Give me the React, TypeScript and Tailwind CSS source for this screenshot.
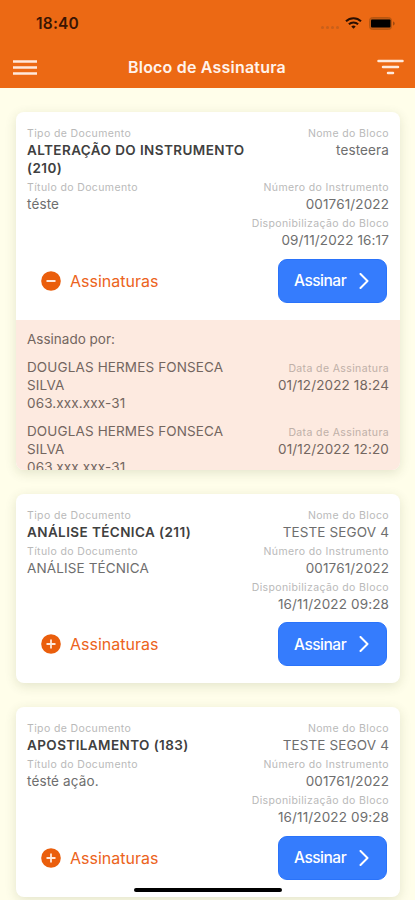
import { useState } from "react"

const signatures = [
  { name: "DOUGLAS HERMES FONSECA SILVA", cpf: "063.xxx.xxx-31", date: "01/12/2022 18:24" },
  { name: "DOUGLAS HERMES FONSECA SILVA", cpf: "063.xxx.xxx-31", date: "01/12/2022 12:20" },
]

const documents = [
  {
    id: 1,
    type: "ALTERAÇÃO DO INSTRUMENTO (210)",
    title: "téste",
    block: "testeera",
    number: "001761/2022",
    available: "09/11/2022 16:17",
  },
  {
    id: 2,
    type: "ANÁLISE TÉCNICA (211)",
    title: "ANÁLISE TÉCNICA",
    block: "TESTE SEGOV 4",
    number: "001761/2022",
    available: "16/11/2022 09:28",
  },
  {
    id: 3,
    type: "APOSTILAMENTO (183)",
    title: "tésté ação.",
    block: "TESTE SEGOV 4",
    number: "001761/2022",
    available: "16/11/2022 09:28",
  },
]

type Doc = (typeof documents)[number]

function Label({ children }: { children: string }) {
  return (
    <span className="block h-[18px] text-[10.5px] leading-[22px] tracking-[0.38px] whitespace-nowrap text-[#b9b9b9]">
      {children}
    </span>
  )
}

function Value({ children }: { children: string }) {
  return <span className="block text-[13.5px] leading-[18px] tracking-[0.13px] text-[#6e6e6e]">{children}</span>
}

function StatusBar() {
  return (
    <div className="flex h-[46px] items-center justify-between pl-9 pr-[20px]">
      <span className="pt-[2px] text-[15.5px] font-semibold leading-none tracking-[0.2px] text-[#3a1503]">18:40</span>
      <div className="flex items-center">
        <div className="mr-[6px] mt-[8px] flex gap-[2px]">
          {[0, 1, 2, 3].map((i) => (
            <span key={i} className="size-[3px] rounded-full bg-[#c9601a]" />
          ))}
        </div>
        <svg width="17" height="12" viewBox="0 0 17 12" fill="none" stroke="#2a0f02" strokeWidth="2">
          <path d="M1 4.3a10.6 10.6 0 0 1 15 0" />
          <path d="M3.9 7.3a6.5 6.5 0 0 1 9.2 0" />
          <path d="M8.5 11.8 6.3 9.6a3.1 3.1 0 0 1 4.4 0z" fill="#2a0f02" stroke="none" />
        </svg>
        <svg className="ml-[7px]" width="26" height="13" viewBox="0 0 26 13">
          <rect x="0.5" y="0.5" width="22" height="12" rx="3" fill="#c05a14" stroke="#b8560f" />
          <rect x="2" y="2.5" width="19.5" height="8" rx="1" fill="#000" />
          <path d="M24 4.5v4c1-.4 1.7-1.1 1.7-2s-.7-1.6-1.7-2z" fill="#a04a10" />
        </svg>
      </div>
    </div>
  )
}

function DocumentCard({ doc, open, onToggle }: { doc: Doc; open: boolean; onToggle: () => void }) {
  return (
    <div className="overflow-hidden rounded-[8px] bg-white shadow-[0_3px_12px_rgba(60,70,20,0.14)]">
      <div className="px-[11px] pb-[17px] pt-[11px]">
        <div className="grid grid-cols-[220px_1fr]">
          <div>
            <Label>Tipo de Documento</Label>
            <span className="block text-[13.5px] font-semibold leading-[18px] tracking-[0.41px] text-[#404040]">
              {doc.type}
            </span>
          </div>
          <div className="text-right">
            <Label>Nome do Bloco</Label>
            <Value>{doc.block}</Value>
          </div>
          <div>
            <Label>Título do Documento</Label>
            <Value>{doc.title}</Value>
          </div>
          <div className="text-right">
            <Label>Número do Instrumento</Label>
            <Value>{doc.number}</Value>
            <Label>Disponibilização do Bloco</Label>
            <Value>{doc.available}</Value>
          </div>
        </div>

        {/* Actions */}
        <div className="mt-[9.5px] flex items-center justify-between pl-[13.5px] pr-[2px]">
          <button type="button" onClick={onToggle} className="flex items-center gap-[9.5px] text-[#ec6320]">
            <svg width="20" height="20" viewBox="0 0 20 20" fill="none" stroke="#ffe9dc" strokeWidth="1.8">
              <circle cx="10" cy="10" r="9.8" fill="#ea5e0c" stroke="none" />
              <path d={open ? "M5.5 10h9" : "M5.5 10h9M10 5.5v9"} />
            </svg>
            <span className="text-[16px] leading-5">Assinaturas</span>
          </button>
          <button
            type="button"
            className="flex h-11 w-[109px] items-center justify-between rounded-[9px] border border-[#2a73fa] bg-[#357cfd] pl-[15px] pr-[17px] text-white"
          >
            <span className="pt-px text-[15.5px] font-medium leading-5 tracking-[-0.5px]">Assinar</span>
            <svg width="10" height="16" viewBox="0 0 10 16" fill="none" stroke="currentColor" strokeWidth="2">
              <path d="M1.5 1l7 7-7 7" strokeLinecap="round" strokeLinejoin="round" />
            </svg>
          </button>
        </div>
      </div>

      {/* Signatures */}
      {open && (
        <div className="h-[150.2px] overflow-hidden bg-[#fdeae0] px-[11px] pt-[10px]">
          <span className="block text-[13.5px] leading-[18px] text-[#73665f]">Assinado por:</span>
          {signatures.map((sig) => (
            <div
              key={sig.date}
              className="mt-[10px] flex justify-between text-[13.5px] leading-[18px] tracking-[0.13px] text-[#73665f]"
            >
              <div className="w-[210px]">
                <span className="block">{sig.name}</span>
                <span className="block">{sig.cpf}</span>
              </div>
              <div className="text-right">
                <span className="block h-[18px] text-[10.5px] leading-[22px] tracking-[0.38px] text-[#bfb0a8]">
                  Data de Assinatura
                </span>
                <span className="block">{sig.date}</span>
              </div>
            </div>
          ))}
        </div>
      )}
    </div>
  )
}

export default function App() {
  const [openId, setOpenId] = useState<number | null>(1)

  return (
    <div className="relative h-[900px] w-[415px] overflow-hidden bg-[#fffeea] font-['Inter',sans-serif]">
      {/* Header */}
      <header className="h-[88px] bg-[#ec6914]">
        <StatusBar />
        <div className="flex h-[42px] items-center justify-between pl-[13px] pr-[11px]">
          <svg width="24" height="16" viewBox="0 0 24 16" stroke="#ffe9dc" strokeWidth="2.5">
            <path d="M0 2.500h24M0 8.500h24M0 14.500h24" />
          </svg>
          <h1 className="text-[16px] font-semibold leading-none tracking-[0.2px] text-[#fff3ec]">
            Bloco de Assinatura
          </h1>
          <svg width="27" height="16" viewBox="0 0 27 16" stroke="#ffe9dc" strokeWidth="2.5" strokeLinecap="round">
            <path d="M1.500 2h24M6 8h15M11 14h5" />
          </svg>
        </div>
      </header>

      <main className="flex flex-col gap-[23.8px] pl-4 pr-[15px] pt-[24.3px]">
        {documents.map((doc) => (
          <DocumentCard
            key={doc.id}
            doc={doc}
            open={openId === doc.id}
            onToggle={() => setOpenId(openId === doc.id ? null : doc.id)}
          />
        ))}
      </main>

      {/* Home indicator */}
      <div className="absolute bottom-[8px] left-[134px] h-[4.5px] w-[148px] rounded-full bg-black" />
    </div>
  )
}
